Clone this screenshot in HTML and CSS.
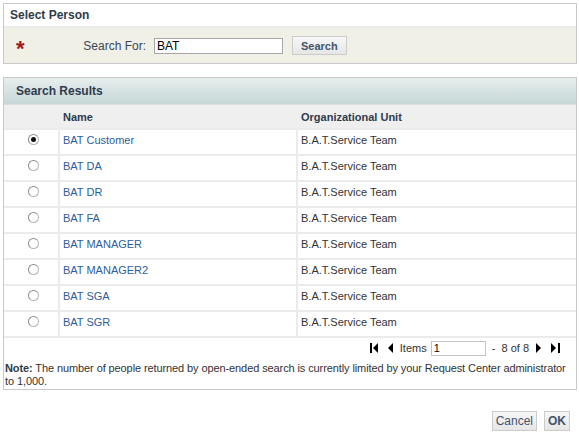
FILE: index.html
```html
<!DOCTYPE html>
<html lang="en">
<head>
    <meta charset="UTF-8">
    <title>Select Person</title>
    <link rel="stylesheet" href="styles.css">
</head>
<body>
    <div class="page">
        <div class="panel">
            <div class="panel-title">Select Person</div>
            <div class="search-bar">
                <span class="required">*</span>
                <label class="search-label" for="q">Search For:</label>
                <input class="search-input" id="q" type="text" value="BAT">
                <button class="btn btn-bold">Search</button>
            </div>
        </div>

        <div class="panel results">
            <div class="results-title">Search Results</div>
            <table class="grid">
                <thead>
                    <tr>
                        <th class="col-radio"></th>
                        <th class="col-name">Name</th>
                        <th>Organizational Unit</th>
                    </tr>
                </thead>
                <tbody>
                    <tr><td class="col-radio"><span class="radio checked"></span></td><td><a href="#">BAT Customer</a></td><td>B.A.T.Service Team</td></tr>
                    <tr><td class="col-radio"><span class="radio"></span></td><td><a href="#">BAT DA</a></td><td>B.A.T.Service Team</td></tr>
                    <tr><td class="col-radio"><span class="radio"></span></td><td><a href="#">BAT DR</a></td><td>B.A.T.Service Team</td></tr>
                    <tr><td class="col-radio"><span class="radio"></span></td><td><a href="#">BAT FA</a></td><td>B.A.T.Service Team</td></tr>
                    <tr><td class="col-radio"><span class="radio"></span></td><td><a href="#">BAT MANAGER</a></td><td>B.A.T.Service Team</td></tr>
                    <tr><td class="col-radio"><span class="radio"></span></td><td><a href="#">BAT MANAGER2</a></td><td>B.A.T.Service Team</td></tr>
                    <tr><td class="col-radio"><span class="radio"></span></td><td><a href="#">BAT SGA</a></td><td>B.A.T.Service Team</td></tr>
                    <tr><td class="col-radio"><span class="radio"></span></td><td><a href="#">BAT SGR</a></td><td>B.A.T.Service Team</td></tr>
                </tbody>
            </table>
            <div class="pager">
                <svg width="8" height="10" viewBox="0 0 8 10"><rect x="0" y="0" width="2" height="10" fill="#000"/><polygon points="8,0 3,5 8,10" fill="#000"/></svg>
                <svg class="pager-prev" width="6" height="10" viewBox="0 0 6 10"><polygon points="6,0 1,5 6,10" fill="#000"/></svg>
                <span class="pager-label">Items</span>
                <input class="pager-input" type="text" value="1">
                <span class="pager-count">- &nbsp;8 of 8</span>
                <svg class="pager-next" width="6" height="10" viewBox="0 0 6 10"><polygon points="0,0 5,5 0,10" fill="#000"/></svg>
                <svg class="pager-last" width="9" height="10" viewBox="0 0 9 10"><polygon points="0,0 5,5 0,10" fill="#000"/><rect x="7" y="0" width="2" height="10" fill="#000"/></svg>
            </div>
            <p class="note"><b>Note:</b> The number of people returned by open-ended search is currently limited by your Request Center administrator to 1,000.</p>
        </div>

        <div class="actions">
            <button class="btn">Cancel</button>
            <button class="btn btn-bold">OK</button>
        </div>
    </div>
</body>
</html>
```

FILE: styles.css
```css
body {
    margin: 0;
    font-family: 'Liberation Sans', Arial, sans-serif;
    font-size: 11px;
    color: #333;
    background: #fff;
}

.page {
    padding: 3px 2px 0 3px;
}

.panel {
    border: 1px solid #c9c9c9;
}

.panel-title {
    height: 22px;
    line-height: 22px;
    padding-left: 6px;
    font-size: 12px;
    font-weight: bold;
    color: #2f3b4c;
    border-bottom: 2px solid #ebebeb;
}

.search-bar {
    display: flex;
    align-items: center;
    height: 35px;
    background-color: #f1f0e6;
}

.required {
    width: 20px;
    margin-left: 12px;
    padding-top: 6px;
    font-size: 22px;
    font-weight: bold;
    color: #a3151f;
}

.search-label {
    width: 110px;
    text-align: right;
    color: #3b4657;
    font-size: 12px;
}

.search-input {
    width: 123px;
    height: 12px;
    margin-left: 8px;
    padding: 1px 2px;
    border: 1px solid #a7a7a7;
    font-family: inherit;
    font-size: 12px;
    color: #000;
}

.btn {
    height: 19px;
    padding: 0 7px;
    border: 1px solid #cccccc;
    background: linear-gradient(#f7f7f7, #e6e6e6);
    font-family: inherit;
    font-size: 11px;
    color: #44546a;
}

.btn-bold {
    font-weight: bold;
}

.search-bar .btn {
    margin-left: 9px;
    padding: 0 8px;
}

.results {
    margin-top: 13px;
}

.results-title {
    height: 26px;
    line-height: 26px;
    padding-left: 12px;
    font-size: 12px;
    font-weight: bold;
    color: #2f3b4c;
    background: linear-gradient(#e7eeee, #c6d6d6);
    border-bottom: 1px solid #d8dddd;
}

.grid {
    width: 100%;
    border-collapse: collapse;
}

.grid thead tr {
    height: 24px;
}

.grid tbody tr {
    height: 26px;
}

.grid th {
    padding: 0 3px;
    text-align: left;
    font-weight: bold;
    color: #2f3b4c;
    background-color: #efefef;
}

.grid td {
    padding: 3px 3px 0;
    border-top: 2px solid #ebebeb;
    border-left: 2px solid #ebebeb;
    vertical-align: top;
    line-height: 14px;
}

.grid th + th {
    border-left: 2px solid #efefef;
}

.grid td.col-radio {
    border-left: none;
    padding-left: 7px;
    text-align: center;
}

.grid th.col-radio {
    width: 48px;
}

.grid td.col-radio {
    width: 44px;
}

.col-name {
    width: 230px;
}

.grid tbody tr:last-child td {
    border-bottom: 2px solid #ebebeb;
}

.grid a {
    color: #2d5d9c;
    text-decoration: none;
}

.radio {
    display: inline-block;
    width: 9px;
    height: 9px;
    border-radius: 50%;
    border: 1px solid #b5b5b5;
    border-top-color: #8c8c8c;
    border-left-color: #8c8c8c;
    background: #fff;
    position: relative;
    top: 1px;
}

.radio.checked::after {
    content: "";
    position: absolute;
    left: 2px;
    top: 2px;
    width: 5px;
    height: 5px;
    border-radius: 50%;
    background: #111;
}

.pager {
    display: flex;
    align-items: center;
    justify-content: flex-end;
    height: 20px;
    padding-right: 16px;
    color: #333;
}

.pager .pager-prev {
    margin-left: 9px;
}

.pager-label {
    margin-left: 7px;
}

.pager-input {
    width: 49px;
    height: 11px;
    margin-left: 4px;
    padding: 1px 2px;
    border: 1px solid #c3c3c3;
    font-family: inherit;
    font-size: 11px;
}

.pager-count {
    margin-left: 6px;
}

.pager .pager-next {
    margin-left: 7px;
}

.pager .pager-last {
    margin-left: 9px;
}

.note {
    margin: 4px 0 0;
    padding: 0 2px 1px 1px;
    line-height: 13px;
    letter-spacing: -0.1px;
}

.note b {
    color: #2f3b4c;
}

.actions {
    display: flex;
    justify-content: flex-end;
    gap: 7px;
    margin-top: 21px;
    padding-right: 7px;
}

.actions .btn {
    height: 20px;
    padding: 0 3px;
    font-size: 12px;
}
```
